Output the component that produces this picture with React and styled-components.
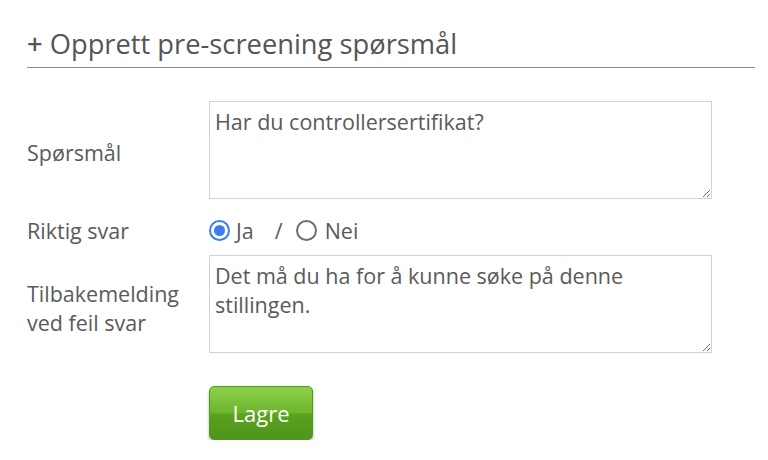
import React, { useState } from 'react';
import styled, { createGlobalStyle } from 'styled-components';

const GlobalStyle = createGlobalStyle`
  body {
    margin: 0;
    background: #ffffff;
    font-family: 'Open Sans', 'Liberation Sans', sans-serif;
    color: #5a5a5a;
  }
`;

const Page = styled.div`
  padding: 23px 13px 0 27px;
`;

const Heading = styled.h2`
  margin: 0;
  font-size: 27.3px;
  font-weight: 400;
  line-height: 42px;
  color: #555555;
  border-bottom: 1px solid #8a8a8a;
  padding-bottom: 2px;
`;

const Plus = styled.span`
  font-weight: 600;
`;

const Form = styled.div`
  display: grid;
  grid-template-columns: 182px 503px;
  align-items: center;
  margin-top: 33px;
`;

const Label = styled.div`
  font-size: 21.5px;
  line-height: 29px;
  color: #5a5a5a;
  margin-top: ${(p) => p.$top || 0}px;
  padding-top: ${(p) => p.$shift || 0}px;
`;

const TextArea = styled.textarea`
  box-sizing: border-box;
  width: 503px;
  height: ${(p) => p.$height}px;
  margin-top: ${(p) => p.$top || 0}px;
  border: 1px solid #d2d2d2;
  padding: 5px 5px;
  font-family: 'Open Sans', 'Liberation Sans', sans-serif;
  font-size: 21.5px;
  line-height: 29px;
  color: #5a5a5a;
  resize: vertical;
  outline: none;
  display: block;
`;

const RadioRow = styled.div`
  display: flex;
  align-items: center;
  font-size: 21.5px;
  height: 30px;
  margin-top: 16px;
`;

const RadioOption = styled.label`
  display: flex;
  align-items: center;
  gap: ${(p) => p.$gap || 6}px;
  cursor: pointer;
`;

const RadioDot = styled.span`
  box-sizing: border-box;
  width: 21px;
  height: 21px;
  border-radius: 50%;
  border: 2px solid ${(p) => (p.$checked ? '#3b7cf0' : '#6e6e6e')};
  display: flex;
  align-items: center;
  justify-content: center;
  &::after {
    content: '';
    width: 11px;
    height: 11px;
    border-radius: 50%;
    background: ${(p) => (p.$checked ? '#3b7cf0' : 'transparent')};
  }
`;

const Slash = styled.span`
  margin: 0 13px 0 21px;
`;

const SaveButton = styled.button`
  grid-column: 2;
  justify-self: start;
  margin-top: 33px;
  width: 104px;
  height: 54px;
  border-radius: 5px;
  border: 1px solid #4f9a1c;
  background: linear-gradient(#8fd04a 0%, #6cb52c 50%, #5aa21f 52%, #4f951a 100%);
  box-shadow: 0 2px 3px rgba(0, 0, 0, 0.3);
  color: #ffffff;
  font-family: 'Open Sans', 'Liberation Sans', sans-serif;
  font-size: 22px;
  cursor: pointer;
`;

export default function App() {
  const [answer, setAnswer] = useState('ja');

  return (
    <>
      <GlobalStyle />
      <Page>
        <Heading><Plus>+</Plus> Opprett pre-screening spørsmål</Heading>
        <Form>
          <Label $shift={4}>Spørsmål</Label>
          <TextArea $height={98} defaultValue="Har du controllersertifikat?" />

          <Label $top={16}>Riktig svar</Label>
          <RadioRow>
            <RadioOption onClick={() => setAnswer('ja')}>
              <RadioDot $checked={answer === 'ja'} />
              Ja
            </RadioOption>
            <Slash>/</Slash>
            <RadioOption $gap={8} onClick={() => setAnswer('nei')}>
              <RadioDot $checked={answer === 'nei'} />
              Nei
            </RadioOption>
          </RadioRow>

          <Label $top={10} $shift={8}>Tilbakemelding<br />ved feil svar</Label>
          <TextArea
            $height={98}
            $top={10}
            defaultValue="Det må du ha for å kunne søke på denne stillingen."
          />

          <SaveButton>Lagre</SaveButton>
        </Form>
      </Page>
    </>
  );
}
